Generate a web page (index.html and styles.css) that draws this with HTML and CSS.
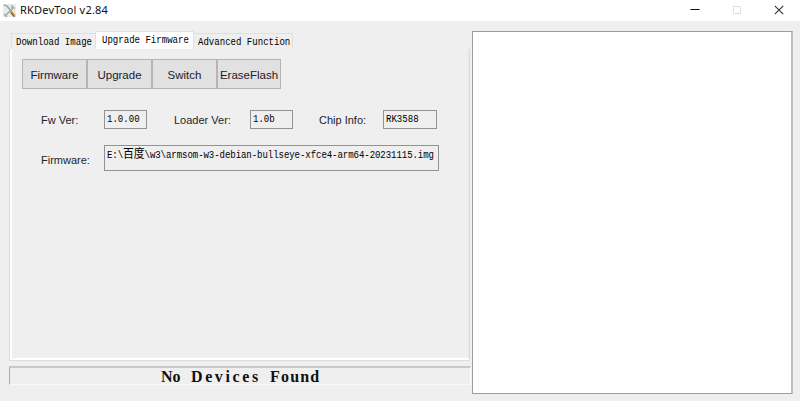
FILE: index.html
```html
<!DOCTYPE html>
<html lang="en">
<head>
<meta charset="utf-8">
<title>RKDevTool v2.84</title>
<link rel="stylesheet" href="styles.css">
</head>
<body>
<header class="titlebar">
  <svg class="logo" width="14" height="16" viewBox="0 0 14 16" fill="none">
    <path fill="#e9ebe9" d="M0 1h13v13H0z"/>
    <path stroke="#9caab2" stroke-width="1.8" d="M1 2l3 1 4 5"/>
    <path stroke="#a5adb0" stroke-width="1.6" d="M11 4L7 8 2 13M9 2v3h3M1 11l3 3"/>
    <path stroke="#c59b28" stroke-width="2.6" d="M7.5 8l4 5"/>
    <path stroke="#514621" stroke-width="1" d="M8 10l3.5 4"/>
  </svg>
  <h1 class="title">RKDevTool v2.84</h1>
  <div class="controls">
    <svg width="10" height="10" viewBox="0 0 10 10"><path stroke="#111" d="M.5 4.5h9"/></svg>
    <svg width="10" height="10" viewBox="0 0 10 10" fill="none"><path stroke="#dedede" d="M1.5 1.5h7v7h-7z"/></svg>
    <svg width="10" height="10" viewBox="0 0 10 10"><path stroke="#333" stroke-width="1.1" d="M.8.8l8.4 8.4M9.2.8L.8 9.2"/></svg>
  </div>
</header>
<main class="window">
  <section class="left">
    <nav class="tabs">
      <div class="tab first"><span class="mono">Download Image</span></div>
      <div class="tab active"><span class="mono">Upgrade Firmware</span></div>
      <div class="tab last"><span class="mono">Advanced Function</span></div>
    </nav>
    <div class="panel">
      <div class="buttons">
        <button>Firmware</button><button>Upgrade</button><button>Switch</button><button>EraseFlash</button>
      </div>
      <div class="info">
        <label>Fw Ver:</label><div class="field"><span class="mono">1.0.00</span></div>
        <label class="loader">Loader Ver:</label><div class="field"><span class="mono">1.0b</span></div>
        <label class="chip">Chip Info:</label><div class="field wide"><span class="mono">RK3588</span></div>
      </div>
      <div class="file">
        <label>Firmware:</label>
        <div class="field path"><span class="mono">E:\<span class="cjk">百度</span>\w3\armsom-w3-debian-bullseye-xfce4-arm64-20231115.img</span></div>
      </div>
    </div>
    <div class="status"><span class="no">No</span> <span class="devices">Devices</span> <span class="found">Found</span></div>
  </section>
  <section class="log"></section>
</main>
</body>
</html>
```

FILE: styles.css
```css
* { box-sizing: border-box; }
body {
  margin: 0;
  width: 800px;
  height: 401px;
  overflow: hidden;
  display: flex;
  flex-direction: column;
  background: #efefef;
  color: #111;
  font-family: "Liberation Sans", Arial, sans-serif;
}
.titlebar {
  height: 21px;
  flex: none;
  display: flex;
  align-items: center;
  background: #fff;
  padding: 0 16px 0 3px;
}
.logo { margin-top: 1px; }
.title {
  margin: -1px 0 0 3px;
  font: 400 11px/16px "Noto Sans", sans-serif;
  letter-spacing: .2px;
  color: #111;
}
.controls {
  display: flex;
  gap: 32px;
  margin-left: auto;
  margin-top: -1px;
}
.window {
  flex: 1;
  display: flex;
  padding: 10px 7px 7px 9px;
}
.left {
  width: 462px;
  margin-right: 1px;
  display: flex;
  flex-direction: column;
}
.mono {
  display: inline-block;
  font: 9.05px/12px "Liberation Mono", "Noto Sans CJK SC", monospace;
  transform: scaleY(1.15);
  white-space: nowrap;
  color: #000;
}
.cjk {
  font-family: "Noto Sans CJK SC", sans-serif;
  font-size: 10.8px;
  line-height: 1;
}
.tabs {
  display: flex;
  height: 18px;
  padding-left: 2px;
  align-items: flex-end;
}
.tab {
  height: 16px;
  border: 1px solid #dfdfdf;
  border-bottom: 0;
  padding: 3px 0 0 4px;
  display: flex;
}
.first { width: 84px; border-right: 0; }
.active {
  height: 18px;
  width: 99px;
  background: #fff;
  padding-left: 6px;
}
.last { width: 99px; border-left: 0; }
.panel {
  width: 461px;
  height: 312px;
  border: 1px solid #dcdcdc;
  border-top: 0;
  box-shadow: inset 2px 0 #fff, inset 0 -2px #fff, inset -1px 0 #e7e7e7;
  padding: 10px 0 0 12px;
}
.buttons { display: flex; width: 260px; }
button {
  width: 65px;
  height: 30px;
  padding: 2px 0 0;
  border: 1px solid #b5b5b5;
  background: #e1e1e1;
  font: 11.5px "Liberation Sans", Arial, sans-serif;
  color: #20202c;
  white-space: nowrap;
}
button:last-child { width: 64px; }
label {
  font-size: 11px;
  line-height: 14px;
  color: #24242c;
  white-space: nowrap;
}
.info {
  display: flex;
  align-items: center;
  margin-top: 21px;
  padding-left: 19px;
}
.info label { width: 63px; }
.info .loader { width: 76px; margin-left: 27px; }
.info .chip { width: 64px; margin-left: 26px; }
.field {
  width: 43px;
  height: 19px;
  border: 1px solid #929292;
  padding: 3px 0 0 2px;
  display: flex;
  align-items: flex-start;
}
.wide { width: 54px; }
.file {
  display: flex;
  align-items: center;
  margin-top: 16px;
  padding-left: 19px;
}
.file label { width: 63px; padding-top: 4px; }
.path {
  width: 335px;
  height: 26px;
  padding-top: 2px;
  letter-spacing: -.07px;
}
.status {
  height: 19px;
  margin-top: 5px;
  border: 1px solid #fafafa;
  border-top: 2px solid #c8c8c8;
  border-left-color: #aaa;
  display: flex;
  align-items: center;
  padding: 2px 0 0 151px;
  gap: 10px;
  font: bold 16px/18px "Liberation Serif", serif;
  color: #111;
}
.no { width: 20px; }
.devices { width: 69px; letter-spacing: 2.6px; }
.found { letter-spacing: 1.2px; }
.log {
  flex: 1;
  border: 1px solid #999ea6;
  border-right: 2px solid #bcc1c4;
  background: #fff;
}
```
